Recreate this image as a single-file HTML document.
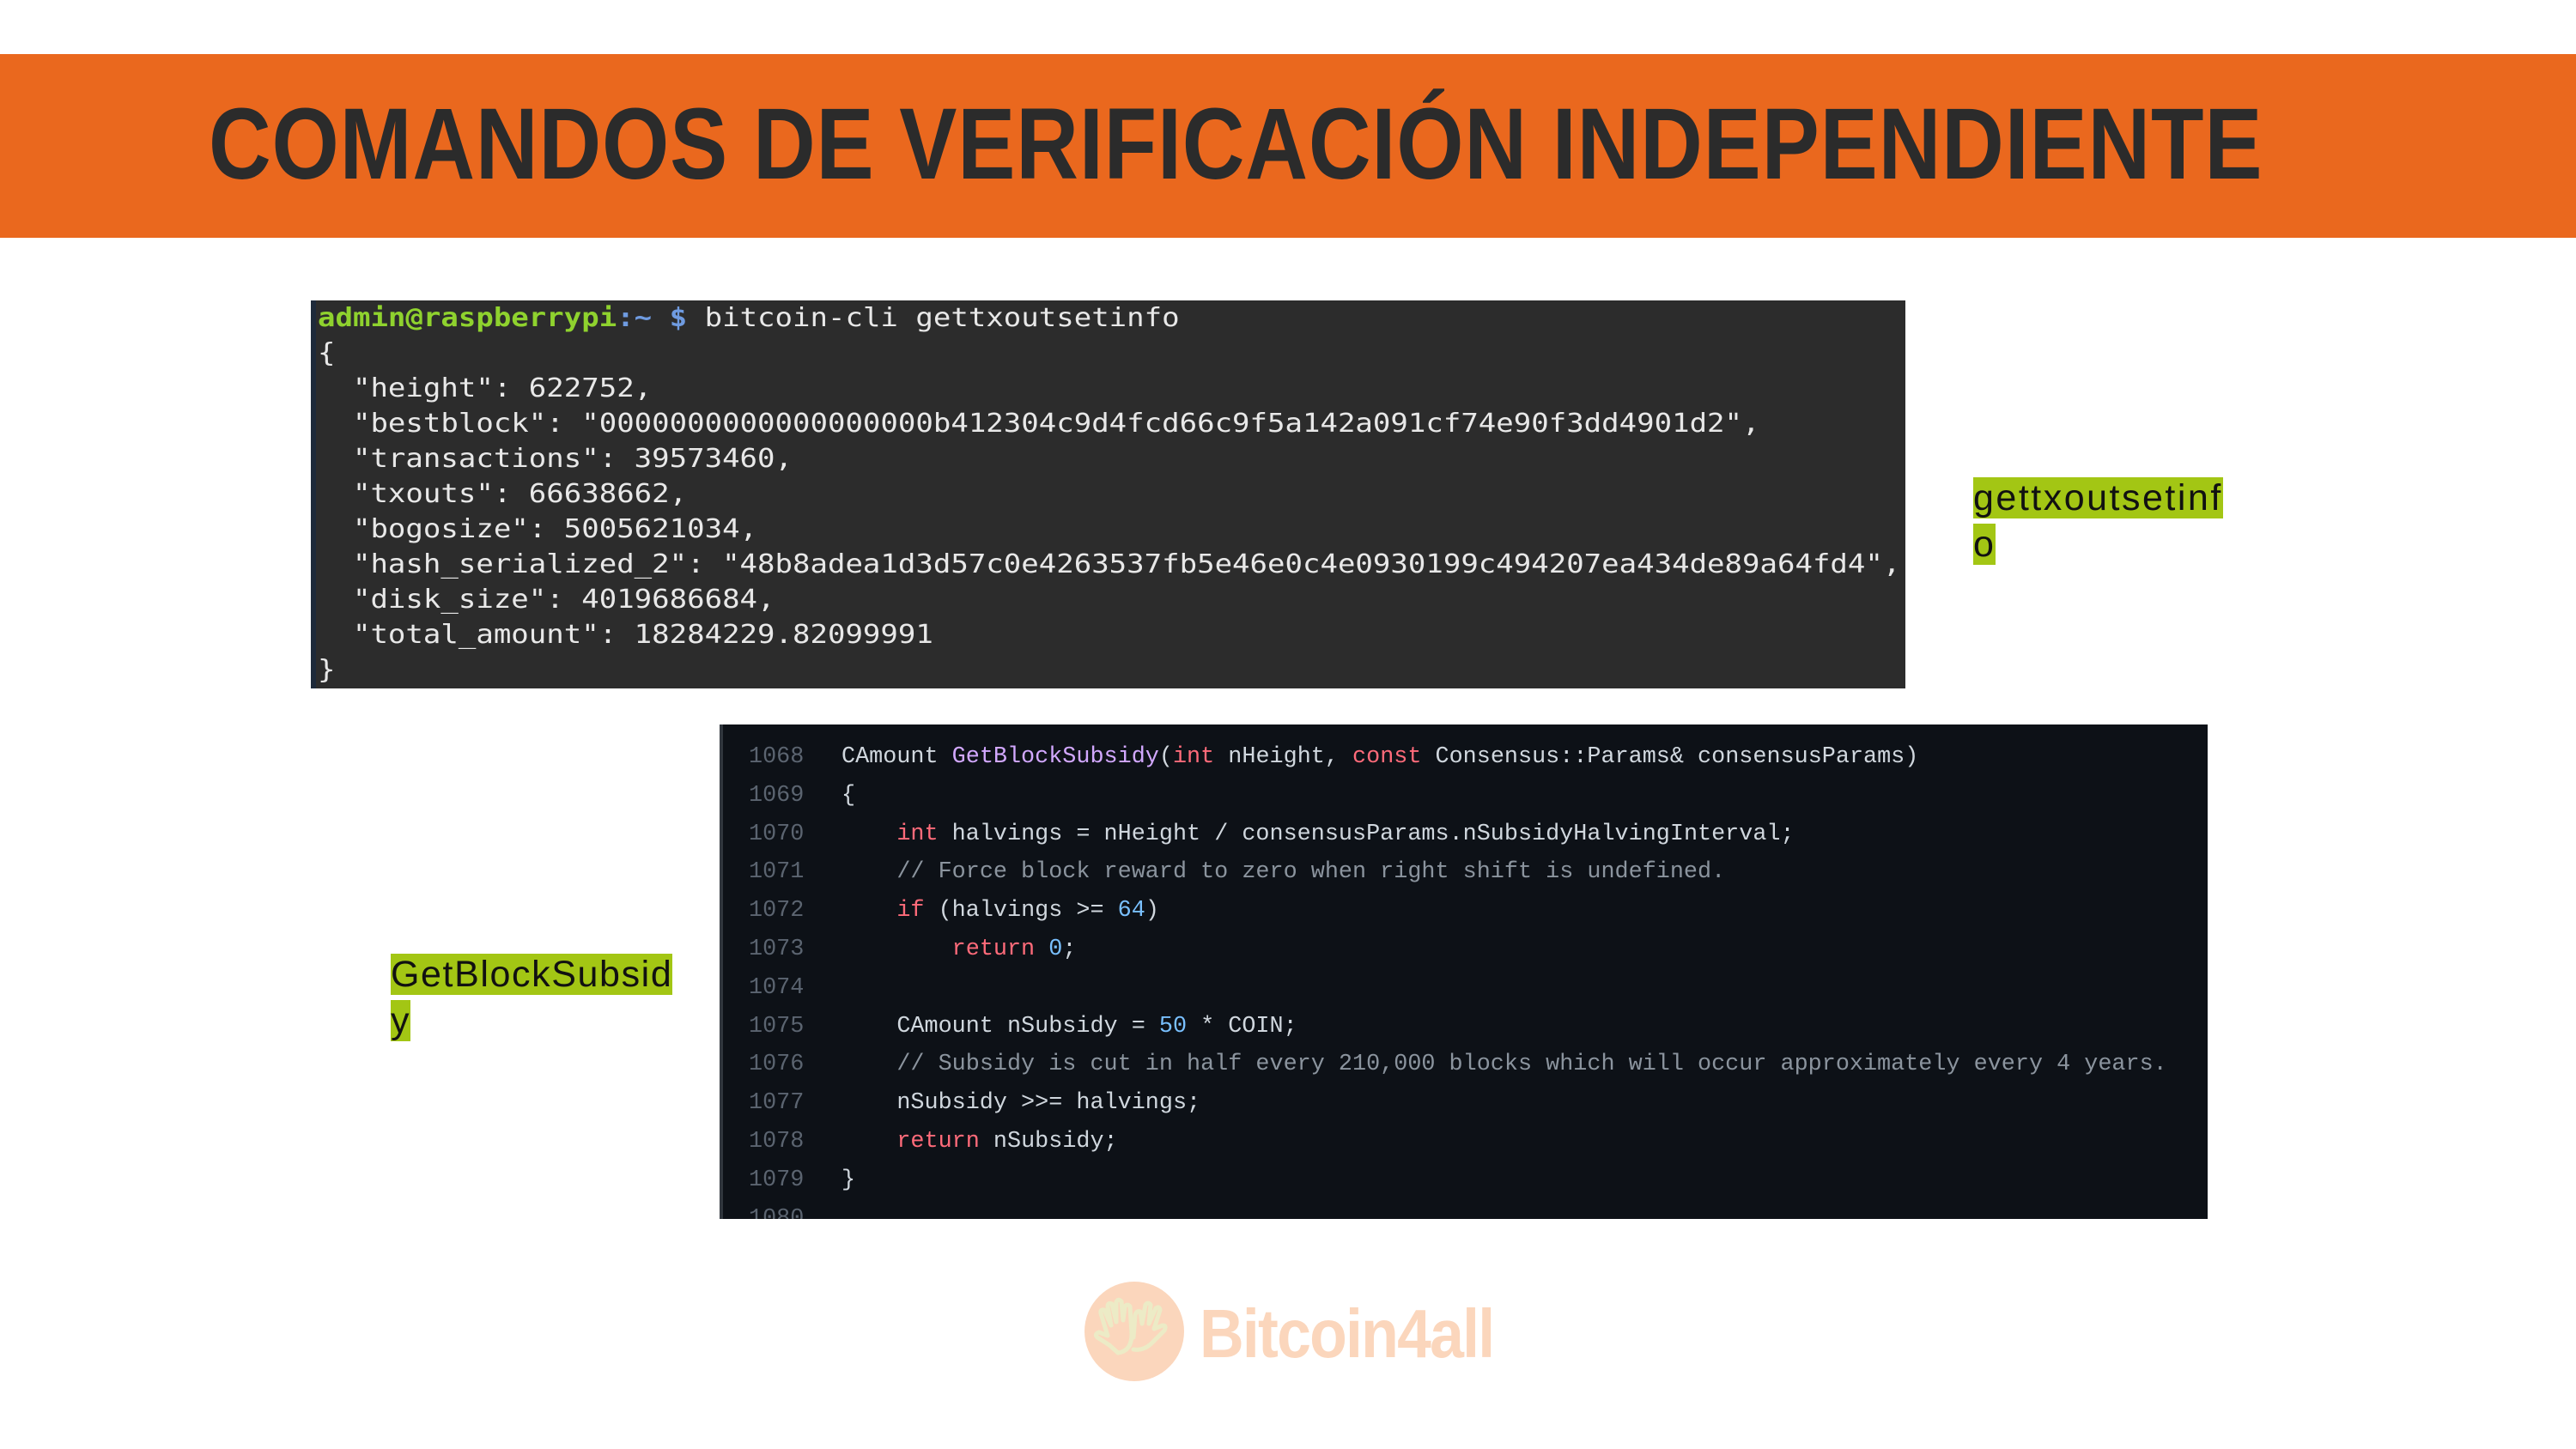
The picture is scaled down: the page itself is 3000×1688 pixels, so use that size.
<!DOCTYPE html>
<html><head><meta charset="utf-8"><style>
*{margin:0;padding:0;box-sizing:border-box}
body{width:3000px;height:1688px;background:#fff;position:relative;overflow:hidden;font-family:"Liberation Sans",sans-serif}
.band{position:absolute;left:0;top:63px;width:3000px;height:214px;background:#ea681e}
.title{position:absolute;left:243px;top:100px;font-size:118px;font-weight:bold;color:#2b2b2b;white-space:nowrap;transform:scaleX(0.853);transform-origin:0 0;letter-spacing:1px}
.term{position:absolute;left:362px;top:350px;width:1857px;height:452px;background:#2c2c2c;border-left:6px solid #1e2a3a;overflow:hidden}
.term pre{position:absolute;left:2px;top:0;font-family:"DejaVu Sans Mono","Liberation Mono",monospace;font-size:30px;line-height:41px;color:#e8e8e8;transform:scaleX(1.134);transform-origin:0 0}
.g{color:#8fd22e;font-weight:bold}.b{color:#6f9be0;font-weight:bold}
.code{position:absolute;left:838px;top:844px;width:1733px;height:576px;background:#0d1117;border-left:4px solid #30363d;overflow:hidden}
.code pre{position:absolute;left:30px;top:16px;font-family:"Liberation Mono",monospace;font-size:26.8px;line-height:44.8px;color:#d0d7de}
.n{color:#5b6470;display:inline-block;width:108px}.k{color:#ff6b7a}.f{color:#d2a8ff}.c{color:#8b949e}.num{color:#79c0ff}
.lab{position:absolute;font-size:43px;line-height:54px;color:#111}
.lab span{background:#a3c614}
</style></head><body>
<div class="band"></div>
<div class="title">COMANDOS DE VERIFICACIÓN INDEPENDIENTE</div>
<div class="term"><pre><span class="g">admin@raspberrypi</span><span class="b">:~ $</span> bitcoin-cli gettxoutsetinfo
{
  "height": 622752,
  "bestblock": "0000000000000000000b412304c9d4fcd66c9f5a142a091cf74e90f3dd4901d2",
  "transactions": 39573460,
  "txouts": 66638662,
  "bogosize": 5005621034,
  "hash_serialized_2": "48b8adea1d3d57c0e4263537fb5e46e0c4e0930199c494207ea434de89a64fd4",
  "disk_size": 4019686684,
  "total_amount": 18284229.82099991
}</pre></div>
<div class="code"><pre><span class="n">1068</span>CAmount <span class="f">GetBlockSubsidy</span>(<span class="k">int</span> nHeight, <span class="k">const</span> Consensus::Params&amp; consensusParams)
<span class="n">1069</span>{
<span class="n">1070</span>    <span class="k">int</span> halvings = nHeight / consensusParams.nSubsidyHalvingInterval;
<span class="n">1071</span>    <span class="c">// Force block reward to zero when right shift is undefined.</span>
<span class="n">1072</span>    <span class="k">if</span> (halvings &gt;= <span class="num">64</span>)
<span class="n">1073</span>        <span class="k">return</span> <span class="num">0</span>;
<span class="n">1074</span>
<span class="n">1075</span>    CAmount nSubsidy = <span class="num">50</span> * COIN;
<span class="n">1076</span>    <span class="c">// Subsidy is cut in half every 210,000 blocks which will occur approximately every 4 years.</span>
<span class="n">1077</span>    nSubsidy &gt;&gt;= halvings;
<span class="n">1078</span>    <span class="k">return</span> nSubsidy;
<span class="n">1079</span>}
<span class="n">1080</span></pre></div>
<div class="lab" style="left:2298px;top:553px;letter-spacing:2.5px"><span>gettxoutsetinf</span><br><span>o</span></div>
<div class="lab" style="left:455px;top:1108px;letter-spacing:1.6px"><span>GetBlockSubsid</span><br><span>y</span></div>
<svg style="position:absolute;left:1262px;top:1492px" width="118" height="118" viewBox="0 0 118 118">
<circle cx="59" cy="59" r="58" fill="#fbd6bc"/>
<g fill="none" stroke="#ecebc6" stroke-width="5" stroke-linejoin="round" stroke-linecap="round">
<path d="M30 75 L16 66 Q12 62 18 60 L28 64 L20 38 Q19 33 24 34 L32 52 L28 30 Q28 25 33 27 L38 48 L38 25 Q40 20 44 24 L46 46 L48 30 Q51 26 54 30 L56 62 Q56 82 40 84 Z"/>
<path d="M58 66 L60 40 Q62 34 66 36 L68 50 L72 28 Q75 24 78 28 L76 50 L84 32 Q88 29 89 34 L82 56 L92 52 Q97 52 94 58 L80 72 Q70 82 58 80"/>
</g></svg>
<div style="position:absolute;left:1397px;top:1508px;font-size:80px;font-weight:bold;color:#fbd6bc;letter-spacing:-2px;transform:scaleX(0.895);transform-origin:0 0">Bitcoin4all</div>
</body></html>
